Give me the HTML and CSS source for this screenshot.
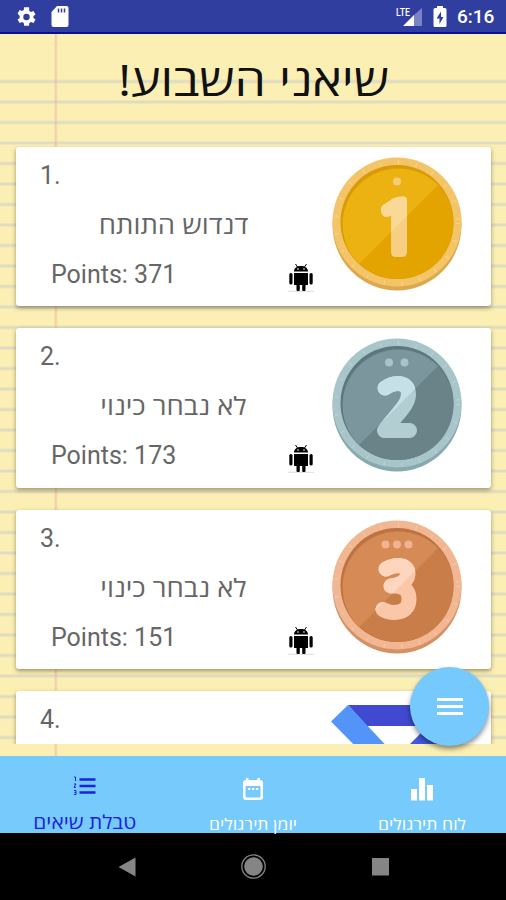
FILE: index.html
```
<!DOCTYPE html>
<html lang="he">
<head>
<meta charset="utf-8">
<title>שיאני השבוע</title>
<link rel="stylesheet" href="styles.css">
</head>
<body>
<svg class="defs" width="0" height="0">
  <defs>
    <clipPath id="shine"><path d="M0 0h134L0 134z"/></clipPath>
    <symbol id="android" viewBox="0 0 28 30">
      <path d="M1 28.300h26" stroke="#ddd" stroke-width="1"/>
      <path d="M7 8.500C7 5 10 3 14 3s7 2 7 5.500zM7 10h14v12H7z"/>
      <path d="M8.500 1l2 3M19.500 1l-2 3" stroke="#000" stroke-width="1"/>
      <rect x="2.300" y="10" width="3.200" height="11.500" rx="1.600"/>
      <rect x="22.500" y="10" width="3.200" height="11.500" rx="1.600"/>
      <rect x="9.500" y="20" width="3.300" height="8" rx="1"/>
      <rect x="15.200" y="20" width="3.300" height="8" rx="1"/>
      <circle cx="11" cy="6" r=".8" fill="#fff"/><circle cx="17" cy="6" r=".8" fill="#fff"/>
    </symbol>
  </defs>
</svg>
<div class="phone">
  <header class="status">
    <svg class="gear" viewBox="2 2 20 20"><path fill="#fff" d="M19.400 13a7.500 7.500 0 0 0 0-2l2.100-1.600-2-3.500-2.500 1a7 7 0 0 0-1.700-1L15 2.200h-4.900l-.3 2.700a7 7 0 0 0-1.700 1l-2.500-1-2 3.500L5.700 11a7.500 7.500 0 0 0 0 2l-2.100 1.600 2 3.500 2.500-1a7 7 0 0 0 1.700 1l.3 2.700H15l.3-2.700a7 7 0 0 0 1.700-1l2.500 1 2-3.500zM12.500 15.200a3.200 3.200 0 1 1 0-6.400 3.200 3.200 0 0 1 0 6.400z"/></svg>
    <svg class="sd" viewBox="0 0 18 21"><path fill="#fff" d="M6 0h9.500Q17.500 0 17.500 2v17q0 2-2 2h-13q-2 0-2-2V6z"/><path d="M7.500 2.500v4M10.500 2.500v4M13.500 2.500v4" stroke="#303f9f" stroke-width="1.500"/></svg>
    <span class="spacer"></span>
    <svg class="signal" viewBox="0 0 28 22"><text x="0" y="9.500" class="lte" textLength="14" lengthAdjust="spacingAndGlyphs">LTE</text><path d="M26 2v18H18V9z" fill="#7983c5"/><path d="M18 9v11H7z" fill="#fff"/></svg>
    <svg class="battery" viewBox="0 0 14 22"><path fill="#fff" d="M4 2V0h6v2h2q1.500 0 1.500 1.500v16q0 1.500-1.500 1.500H2Q.5 21 .5 19.500v-16Q.5 2 2 2z"/><path fill="#303f9f" d="M8 5.500l-4.500 7H6.500V18l4-7H8z"/></svg>
    <span class="clock">6:16</span>
  </header>
  <main class="page">
    <h1 class="title" dir="rtl">שיאני השבוע!</h1>
    <div class="list">
      <article class="card">
        <div class="info"><div class="rank">1.</div><div class="name" dir="rtl">דנדוש התותח</div><div class="points">Points: 371</div></div>
        <svg class="bot"><use href="#android"/></svg>
        <svg class="medal" viewBox="0 0 130 134">
          <ellipse cx="65" cy="68" rx="64.500" ry="65.500" fill="#dda94e"/><circle cx="65" cy="65" r="64.500" fill="#f3c568"/>
          <circle class="ticks" cx="65" cy="66" r="61" stroke="#f8d68c"/>
          <ellipse cx="65" cy="65" rx="56.500" ry="57" fill="#d79a08"/><ellipse cx="66" cy="66.500" rx="55.500" ry="55.500" fill="#e4a400"/>
          <path fill="#ecb212" d="M27 107A55.500 55.500 0 0 1 106 28z"/>
          <circle cx="65" cy="24.500" r="4" fill="#f5cd76"/>
          <path fill="#f6cf83" d="M61 41.500Q65 39.500 71 39.500q4 0 4 4V95q0 5-5 5h-6q-5 0-5-5V58.500q-6 3-9-1-3-7 2-10z"/>
          <path fill="#fad996" clip-path="url(#shine)" d="M61 41.500Q65 39.500 71 39.500q4 0 4 4V95q0 5-5 5h-6q-5 0-5-5V58.500q-6 3-9-1-3-7 2-10z"/>
        </svg>
      </article>
      <article class="card">
        <div class="info"><div class="rank">2.</div><div class="name" dir="rtl">לא נבחר כינוי</div><div class="points">Points: 173</div></div>
        <svg class="bot"><use href="#android"/></svg>
        <svg class="medal" viewBox="0 0 130 134">
          <ellipse cx="65" cy="68" rx="64.500" ry="65.500" fill="#88aaad"/><circle cx="65" cy="65" r="64.500" fill="#a8c6c9"/>
          <circle class="ticks" cx="65" cy="66" r="61" stroke="#bcd4d7"/>
          <ellipse cx="65" cy="65" rx="56.500" ry="57" fill="#5d777e"/><ellipse cx="66" cy="66.500" rx="55.500" ry="55.500" fill="#698389"/>
          <path fill="#7c969d" d="M27 107A55.500 55.500 0 0 1 106 28z"/>
          <g fill="#a9c3c9"><circle cx="57" cy="24.500" r="4"/><circle cx="72.500" cy="24.500" r="4"/></g>
          <path class="digit" stroke="#b3ced3" d="M53 50q6-4.500 12.500-4.500 11 0 11 11c0 10-10 18-24 36h25"/>
          <path class="digit" stroke="#c5e0e6" clip-path="url(#shine)" d="M53 50q6-4.500 12.500-4.500 11 0 11 11c0 10-10 18-24 36h25"/>
        </svg>
      </article>
      <article class="card">
        <div class="info"><div class="rank">3.</div><div class="name" dir="rtl">לא נבחר כינוי</div><div class="points">Points: 151</div></div>
        <svg class="bot"><use href="#android"/></svg>
        <svg class="medal" viewBox="0 0 130 134">
          <ellipse cx="65" cy="68" rx="64.500" ry="65.500" fill="#d49165"/><circle cx="65" cy="65" r="64.500" fill="#f1b793"/>
          <circle class="ticks" cx="65" cy="66" r="61" stroke="#f7c9aa"/>
          <ellipse cx="65" cy="65" rx="56.500" ry="57" fill="#bd7240"/><ellipse cx="66" cy="66.500" rx="55.500" ry="55.500" fill="#c97d48"/>
          <path fill="#d68a55" d="M27 107A55.500 55.500 0 0 1 106 28z"/>
          <g fill="#efb48f"><circle cx="53.500" cy="24.500" r="4"/><circle cx="65" cy="24.500" r="4"/><circle cx="76.500" cy="24.500" r="4"/></g>
          <path class="digit" stroke="#fac8a9" d="M54 49Q60 45.500 67 45.500q9 .5 9 8.500-1 10-17 12 18-1 18 13 0 13-15 13.500-6 0-11-3"/>
          <path class="digit" stroke="#fdd6bd" clip-path="url(#shine)" d="M54 49Q60 45.500 67 45.500q9 .5 9 8.500-1 10-17 12 18-1 18 13 0 13-15 13.500-6 0-11-3"/>
        </svg>
      </article>
      <article class="card">
        <div class="info"><div class="rank">4.</div></div>
        <svg class="ribbon" viewBox="0 0 135 60"><path fill="#4049cf" d="M18 5h98L97 26H37z"/><path fill="#5294fa" d="M18 5l46 49H33L1 21.500z"/><path fill="#4058dc" d="M98 26l21-21 16 16-33 33H70z"/></svg>
      </article>
    </div>
    <button class="fab" aria-label="תפריט"><svg viewBox="0 0 26 20"><path d="M0 2.500h26M0 9.500h26M0 16.500h26" stroke="#fff" stroke-width="3"/></svg></button>
  </main>
  <nav class="tabs">
    <div class="tab active">
      <svg viewBox="0 0 24 24"><path d="M7.500 5.500h16M7.500 12h16M7.500 18.500h16" stroke="currentColor" stroke-width="2.700"/><path d="M2 3h1.500v4M2 10h2l-2 3.300h2M2 16.500h2v4H2M2.500 18.500H4" fill="none" stroke="currentColor"/></svg>
      <span dir="rtl">טבלת שיאים</span>
    </div>
    <div class="tab">
      <svg viewBox="0 0 24 24"><path fill="currentColor" fill-rule="evenodd" d="M5 1h2.500v2h9V1H19v2q3 0 3 3v14q0 3-3 3H5q-3 0-3-3V6q0-3 3-3zM4.500 9v10q0 1.500 1.500 1.500h12q1.500 0 1.500-1.500V9z"/><path d="M7 12h2.300m1.700 0h2.300m1.700 0h2.300" stroke="currentColor" stroke-width="2.200"/></svg>
      <span dir="rtl">יומן תירגולים</span>
    </div>
    <div class="tab">
      <svg viewBox="0 0 24 24"><path fill="currentColor" d="M1 12h6v11.500H1zM9 1h6v22.500H9zM17 8h6v15.500h-6z"/></svg>
      <span dir="rtl">לוח תירגולים</span>
    </div>
  </nav>
  <footer class="system">
    <svg viewBox="0 0 26 26"><path fill="#858585" d="M21.500 3.500v19L4.500 13z"/></svg>
    <svg viewBox="0 0 26 26"><circle cx="13.500" cy="12.500" r="11.700" fill="none" stroke="#858585" stroke-width="1.300"/><circle cx="13.500" cy="12.500" r="9.300" fill="#858585"/></svg>
    <svg viewBox="0 0 26 26"><path fill="#858585" d="M5 4h17v17.500H5z"/></svg>
  </footer>
</div>
</body>
</html>
```

FILE: styles.css
```
* { box-sizing: border-box; }
body { margin: 0; font-family: Roboto, "Open Sans", sans-serif; }
.defs { position: absolute; }
.phone { width: 506px; height: 900px; display: flex; flex-direction: column; overflow: hidden; background: #000; }
.status { height: 34px; flex: none; display: flex; align-items: center; padding: 1px 11px 0 16px; background: #303f9f; border-bottom: 2px solid #06108f; }
.gear { width: 20px; height: 20px; }
.sd { width: 18px; height: 21px; margin-left: 15px; }
.spacer { flex: 1; }
.signal { width: 28px; height: 22px; }
.lte { font: 500 11px Roboto, sans-serif; fill: #fff; }
.battery { width: 14px; height: 22px; margin-left: 9px; }
.clock { margin-left: 10px; width: 38px; font-size: 19px; font-weight: 500; color: #fff; line-height: 22px; white-space: nowrap; }
.page {
  position: relative; flex: none; height: 722px; padding: 0 15px 12px 16px;
  display: flex; flex-direction: column;
  background:
    linear-gradient(to right, transparent 54px, rgba(232,170,150,.45) 55.500px, rgba(232,170,150,.45) 56px, transparent 58px),
    linear-gradient(#fbefb4, #fbefb4) top / 100% 40px no-repeat,
    repeating-linear-gradient(to bottom, transparent 0 4px, #dfdcc0 6px 7px, transparent 9px 20.500px),
    #fbefb4;
}
.title { margin: 0; height: 112px; flex: none; padding-top: 17px; text-align: center; font: 400 44px/56px "Open Sans", sans-serif; color: #111; transform: scaleX(1.135); }
.list { flex: 1; min-height: 0; overflow: hidden; display: flex; flex-direction: column; gap: 22px; margin: 0 -15px 0 -16px; padding: 1px 15px 0 16px; }
.card { flex: none; height: 159.500px; display: flex; align-items: flex-start; background: #fff; border-radius: 3px; box-shadow: 0 2px 4px rgba(70,60,20,.5); color: #666; }
.card:first-child { margin-top: -.5px; }
.info { width: 270px; padding: 13px 0 0 24px; }
.rank { font-size: 25px; line-height: 32px; }
.name { font: 25px/32px "Open Sans", sans-serif; margin-top: 16px; text-align: center; transform: translateX(10.500px) scaleX(1.1); }
.points { font-size: 25px; line-height: 32px; margin: 19px 0 0 11px; }
.bot { width: 28px; height: 30px; margin: 116px 0 0 1px; }
.medal { width: 130px; height: 134px; margin: 10px 0 0 17px; }
.ticks { fill: none; stroke-width: 4; stroke-dasharray: 1 17; }
.digit { fill: none; stroke-width: 15; stroke-linecap: round; stroke-linejoin: round; }
.ribbon { width: 135px; height: 60px; margin: 9px 0 0 44px; }
.fab { position: absolute; left: 410px; top: 633px; width: 79px; height: 79px; border: 0; border-radius: 50%; background: #76c9fc; box-shadow: 0 3px 5px rgba(0,0,0,.45); display: grid; place-items: center; padding: 0; }
.fab svg { width: 26px; height: 20px; }
.tabs { height: 77px; flex: none; display: grid; grid-template-columns: repeat(3, 1fr); background: #76cafc; color: #fff; }
.tab { display: flex; flex-direction: column; align-items: center; padding-top: 21px; font: 16px/18px "Open Sans", sans-serif; white-space: nowrap; }
.tab span { transform: scaleX(1.1); }
.tab svg { width: 24px; height: 24px; flex: none; margin-bottom: 14px; }
.tab.active { color: #1c22e0; font-size: 19px; line-height: 20px; padding-top: 18px; }
.system { flex: 1; display: grid; grid-template-columns: repeat(3, 126.500px); justify-content: center; align-items: center; justify-items: center; background: #000; }
.system svg { width: 26px; height: 26px; }
```
